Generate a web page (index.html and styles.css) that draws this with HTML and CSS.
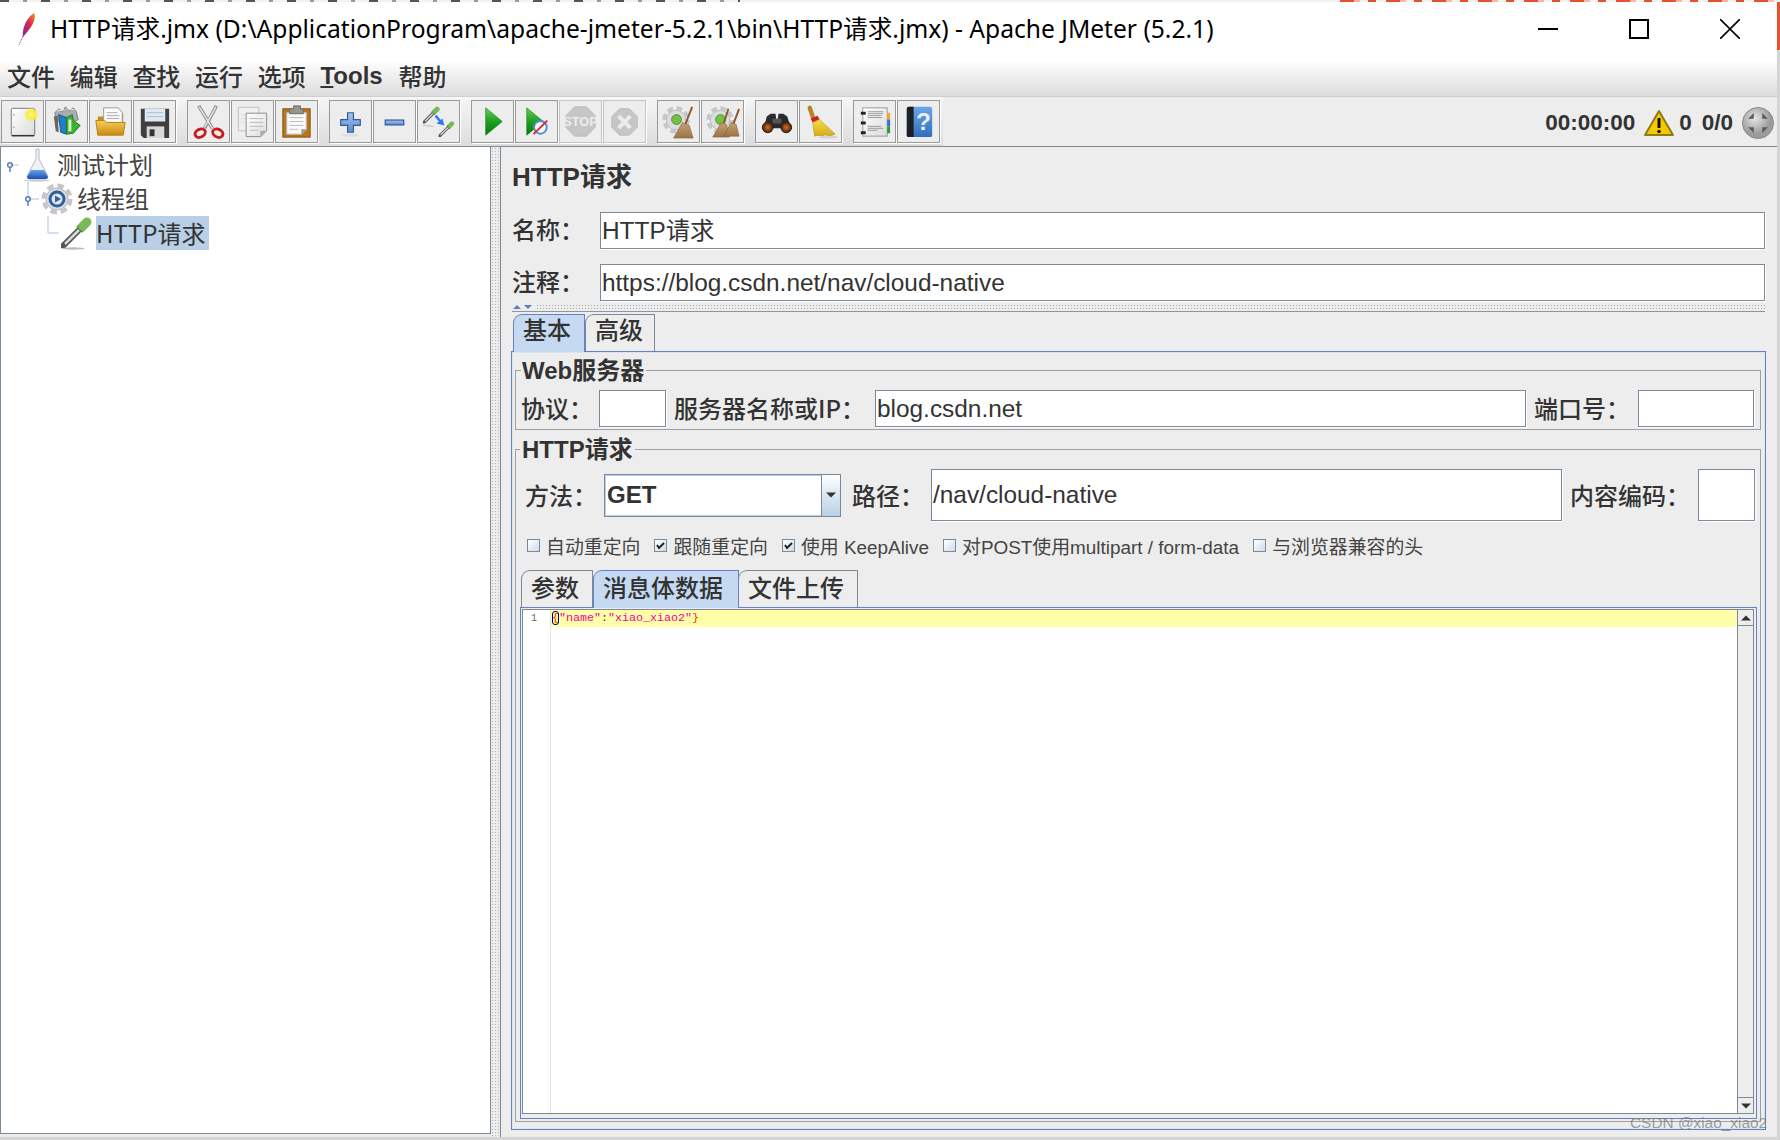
FILE: index.html
```html
<!DOCTYPE html>
<html lang="zh">
<head>
<meta charset="utf-8">
<title>HTTP请求.jmx - Apache JMeter (5.2.1)</title>
<link rel="stylesheet" href="styles.css">
</head>
<body>
<svg class="defs" aria-hidden="true">
  <defs>
    <linearGradient id="gPlay" x1="0" y1="0" x2="0" y2="1"><stop offset="0" stop-color="#6fca5e"/><stop offset=".5" stop-color="#1ea11e"/><stop offset="1" stop-color="#067a06"/></linearGradient>
    <linearGradient id="gFolder" x1="0" y1="0" x2="0" y2="1"><stop offset="0" stop-color="#f6cd5c"/><stop offset="1" stop-color="#c98a14"/></linearGradient>
    <linearGradient id="gPage" x1="0" y1="0" x2="1" y2="1"><stop offset="0" stop-color="#ffffff"/><stop offset="1" stop-color="#dcdcdc"/></linearGradient>
    <linearGradient id="gBlue" x1="0" y1="0" x2="0" y2="1"><stop offset="0" stop-color="#a6c4ea"/><stop offset="1" stop-color="#5d8ccc"/></linearGradient>
    <linearGradient id="gFeather" x1="1" y1="0" x2="0" y2="1"><stop offset="0" stop-color="#f7941e"/><stop offset=".45" stop-color="#d9264f"/><stop offset="1" stop-color="#7c2a8c"/></linearGradient>
    <linearGradient id="gHelp" x1="0" y1="0" x2="0" y2="1"><stop offset="0" stop-color="#68a6e8"/><stop offset="1" stop-color="#2f6fbd"/></linearGradient>
    <linearGradient id="gFlask" x1="0" y1="0" x2="0" y2="1"><stop offset="0" stop-color="#63a3ec"/><stop offset="1" stop-color="#1c4fb0"/></linearGradient>
    <linearGradient id="gBroom" x1="0" y1="0" x2="0" y2="1"><stop offset="0" stop-color="#f5e04a"/><stop offset="1" stop-color="#d4a615"/></linearGradient>
    <linearGradient id="gTwig" x1="0" y1="0" x2="0" y2="1"><stop offset="0" stop-color="#c7a173"/><stop offset="1" stop-color="#9a7346"/></linearGradient>
    <radialGradient id="gGlow"><stop offset="0" stop-color="#fff68a"/><stop offset=".5" stop-color="#f9ec3e"/><stop offset="1" stop-color="#f9ec3e" stop-opacity="0"/></radialGradient>
    <radialGradient id="gKnob" cx=".4" cy=".35"><stop offset="0" stop-color="#e6e6e6"/><stop offset="1" stop-color="#9b9b9b"/></radialGradient>
    <radialGradient id="gLens" cx=".5" cy=".5"><stop offset="0" stop-color="#d9701f"/><stop offset="1" stop-color="#47210c"/></radialGradient>
    <symbol id="gear" viewBox="0 0 32 32">
      <circle cx="16" cy="16" r="13.500" fill="none" stroke="#c4c6c9" stroke-width="4" stroke-dasharray="6.600 4"/>
      <circle cx="16" cy="16" r="11" fill="#dcdde0" stroke="#b2b4b7"/>
    </symbol>
    <symbol id="dropper" viewBox="0 0 32 32">
      <path d="M2 30 L19 13" stroke="#555" stroke-width="6" stroke-linecap="round"/>
      <path d="M4 28 L18 14" stroke="#d8d8d8" stroke-width="2.500"/>
      <path d="M17 9 L23 15" stroke="#5d9a3f" stroke-width="5"/>
      <path d="M22 10 L26 6" stroke="#79b95a" stroke-width="9" stroke-linecap="round"/>
    </symbol>
  </defs>
</svg>
<div class="window">
  <div class="strip">
    <span class="strip-dark"></span>
    <span class="strip-gap"></span>
    <span class="strip-red"></span>
  </div>
  <div class="frame">
    <header class="titlebar">
      <svg class="feather" width="20" height="34" viewBox="0 0 20 34"><path d="M17 1 C20 6 15 14 11 19 L6 25 C5 20 7 8 17 1Z" fill="url(#gFeather)"/><path d="M6 24 L2 33" stroke="#8c6a9c" stroke-width="1" stroke-dasharray="2 1"/></svg>
      <h1 class="title">HTTP请求.jmx (D:\ApplicationProgram\apache-jmeter-5.2.1\bin\HTTP请求.jmx) - Apache JMeter (5.2.1)</h1>
      <div class="winbtns">
        <svg width="20" height="20" viewBox="0 0 20 20"><path d="M0 10h20" stroke="#000" stroke-width="2"/></svg>
        <svg width="20" height="20" viewBox="0 0 20 20"><rect x="1" y="1" width="18" height="18" fill="none" stroke="#000" stroke-width="2"/></svg>
        <svg width="20" height="20" viewBox="0 0 20 20"><path d="M0 0L20 20M20 0L0 20" stroke="#000" stroke-width="1.600"/></svg>
      </div>
    </header>
    <nav class="menubar">
      <span>文件</span><span>编辑</span><span>查找</span><span>运行</span><span>选项</span><span class="menu-tools"><u>T</u>ools</span><span>帮助</span>
    </nav>
    <div class="toolbar">
      <div class="tools">
        <div class="group">
          <button class="tb"><svg width="41" height="41" viewBox="0 0 42 42"><rect x="9.500" y="7.500" width="24" height="28" rx="1" fill="url(#gPage)" stroke="#777"/><path d="M10 35.500h23" stroke="#333" stroke-width="1.500"/><circle cx="12" cy="14" r=".8" fill="#999"/><circle cx="12" cy="27" r=".8" fill="#999"/><circle cx="30" cy="14" r="8" fill="url(#gGlow)"/></svg></button>
          <button class="tb"><svg width="41" height="41" viewBox="0 0 42 42"><path d="M9 12l4-4 4 3 3-5 4 4 4-3 3 4 2 8-4 2H11z" fill="#a7adb2" stroke="#7a7f83"/><path d="M11 10l8-1M21 8l8 1" stroke="#e4e6e8"/><path d="M8 16l4-1 1 17-3-1z" fill="#6c6660"/><path d="M13 14l8 3v17l-6-2z" fill="#1f7fc9" stroke="#11568d"/><path d="M21 17l6-3 1 6 7 5-7 8-7 1z" fill="#3fb02f" stroke="#1f7a1a"/><path d="M23 19h3v12h-3z" fill="#d8f0cf"/></svg></button>
          <button class="tb"><svg width="41" height="41" viewBox="0 0 42 42"><path d="M8 16h8l2-3h16v20H8z" fill="#c78e1e"/><path d="M14 7h15l4 5v11H14z" fill="#fbfbfb" stroke="#999"/><path d="M17 12h11M17 15h13M17 18h13" stroke="#aaa"/><path d="M6 20h9l2 2h19l-2 13H8z" fill="url(#gFolder)" stroke="#b9810f"/></svg></button>
          <button class="tb"><svg width="41" height="41" viewBox="0 0 42 42"><path d="M7 8h29v30H10l-3-3z" fill="#3f3f42"/><rect x="11" y="8" width="21" height="13" fill="#e1e8f2"/><path d="M13 12h17M13 16h17" stroke="#a7bad3"/><path d="M13 26h18v12H13z" fill="#d8d8d8"/><rect x="16" y="29" width="5" height="7" fill="#333"/></svg></button>
        </div>
        <div class="group">
          <button class="tb"><svg width="41" height="41" viewBox="0 0 42 42"><path d="M11 5l14 23M29 5L17 28" stroke="#8b8b8b" stroke-width="3.500"/><path d="M11.500 6l13.500 22M28.500 6L17 27" stroke="#e6e6e6" stroke-width="1.600"/><ellipse cx="12.500" cy="33" rx="5.500" ry="4" fill="none" stroke="#cc1a1f" stroke-width="3" transform="rotate(-25 12.500 33)"/><ellipse cx="30.500" cy="33" rx="5.500" ry="4" fill="none" stroke="#cc1a1f" stroke-width="3" transform="rotate(25 30.500 33)"/></svg></button>
          <button class="tb"><svg width="41" height="41" viewBox="0 0 42 42"><rect x="6.500" y="6.500" width="21" height="24" fill="#efefef" stroke="#c2c2c2"/><path d="M9 14h6M9 18h6M9 22h6" stroke="#ddd"/><path d="M14.500 12.500h21v18l-6 6h-15z" fill="url(#gPage)" stroke="#8d8d8d"/><path d="M35 30.500h-6v6z" fill="#aaa"/><path d="M18 18h14M18 22h14M18 26h14M18 30h9" stroke="#bbb"/></svg></button>
          <button class="tb"><svg width="41" height="41" viewBox="0 0 42 42"><rect x="7" y="8" width="28" height="29" fill="#b8751c" stroke="#83531a"/><path d="M11 12h20v17l-5 5H11z" fill="#fafafa" stroke="#bbb"/><path d="M31 29h-5v5z" fill="#999"/><path d="M14 17h14M14 21h14M14 25h14M14 29h9" stroke="#bbb"/><path d="M14 8h4V5h7v3h3v5H14z" fill="#96958a" stroke="#6d6c63"/></svg></button>
        </div>
        <div class="group">
          <button class="tb"><svg width="41" height="41" viewBox="0 0 42 42"><path d="M18 12h6v7h7v6h-7v7h-6v-7h-7v-6h7z" fill="url(#gBlue)" stroke="#2c5aa0" stroke-width="1.200"/><ellipse cx="21" cy="35" rx="9" ry="1.500" fill="#ddd"/></svg></button>
          <button class="tb"><svg width="41" height="41" viewBox="0 0 42 42"><rect x="11.500" y="19.500" width="19" height="5" fill="url(#gBlue)" stroke="#2c5aa0" stroke-width="1.200"/></svg></button>
          <button class="tb"><svg width="41" height="41" viewBox="0 0 42 42"><use href="#dropper" x="5" y="5" width="18" height="18"/><use href="#dropper" x="21" y="20" width="17" height="17"/><path d="M5 25l11 1" stroke="#bbb"/><path d="M18 15l5 6" stroke="#2a7af0" stroke-width="2.500"/><path d="M27 25l-2-7-6 5z" fill="#2a7af0"/></svg></button>
        </div>
        <div class="group">
          <button class="tb"><svg width="41" height="41" viewBox="0 0 42 42"><path d="M14 7l17 14-17 14z" fill="url(#gPlay)" stroke="#0a7d0a" stroke-width=".6"/></svg></button>
          <button class="tb"><svg width="41" height="41" viewBox="0 0 42 42"><path d="M11 7l17 14-17 14z" fill="url(#gPlay)" stroke="#0a7d0a" stroke-width=".6"/><circle cx="25" cy="27" r="6.500" fill="#f3f6fa" stroke="#4f8fd2" stroke-width="2"/><path d="M18 34L32 20" stroke="#e0202a" stroke-width="1.800"/></svg></button>
          <button class="tb tb-off"><svg width="41" height="41" viewBox="0 0 42 42"><path d="M15 6h12l9 9v12l-9 9H15l-9-9V15z" fill="#c6c6c6" stroke="#bbb"/><text class="stop-text" x="21" y="26" text-anchor="middle">STOP</text></svg></button>
          <button class="tb tb-off"><svg width="41" height="41" viewBox="0 0 42 42"><path d="M16 8h10l8 8v11l-8 8H16l-8-8V16z" fill="#c6c6c6" stroke="#bbb"/><path d="M15 15.500l12 12M27 15.500l-12 12" stroke="#ececec" stroke-width="4"/></svg></button>
        </div>
        <div class="group">
          <button class="tb"><svg width="41" height="41" viewBox="0 0 42 42"><use href="#gear" x="4" y="5" width="29" height="29"/><circle cx="19" cy="19" r="5" fill="#76c043" stroke="#4f8f2a"/><path d="M35 6L28 24" stroke="#8a5b2e" stroke-width="2"/><path d="M25 22l7 3 4 13H16z" fill="url(#gTwig)" stroke="#86633a" stroke-width=".6"/></svg></button>
          <button class="tb"><svg width="41" height="41" viewBox="0 0 42 42"><use href="#gear" x="4" y="5" width="29" height="29"/><circle cx="19" cy="19" r="5" fill="#76c043" stroke="#4f8f2a"/><path d="M27 8L22 24M38 8L32 24" stroke="#8a5b2e" stroke-width="2"/><path d="M20 22l5 2 3 13H11z" fill="url(#gTwig)" stroke="#86633a" stroke-width=".6"/><path d="M30 22l5 2 3 12H22z" fill="url(#gTwig)" stroke="#86633a" stroke-width=".6"/></svg></button>
        </div>
        <div class="group">
          <button class="tb"><svg width="41" height="41" viewBox="0 0 42 42"><path d="M11 16l4-3h5l1 8h1l1-8h5l4 3 4 12H8z" fill="#2b2b2b"/><rect x="17" y="18" width="9" height="5" fill="#555"/><circle cx="12" cy="27" r="5.500" fill="url(#gLens)" stroke="#222"/><circle cx="31" cy="27" r="5.500" fill="url(#gLens)" stroke="#222"/></svg></button>
          <button class="tb"><svg width="41" height="41" viewBox="0 0 42 42"><path d="M10 7l4 12" stroke="#b9812d" stroke-width="4.500" stroke-linecap="round"/><path d="M11 18l7-3 2 4-7 3z" fill="#cf1f25"/><path d="M13 22l7-3 16 15-7 2-4-2-1 3-5-2-4 1z" fill="url(#gBroom)" stroke="#b58e12" stroke-width=".6"/><ellipse cx="29" cy="37" rx="10" ry="1.500" fill="#d4d4d4"/></svg></button>
        </div>
        <div class="group">
          <button class="tb"><svg width="41" height="41" viewBox="0 0 42 42"><rect x="9" y="7" width="25" height="29" fill="url(#gPage)" stroke="#999"/><path d="M14 11h16M14 13h16M14 15h14M14 17h15M14 26h14M14 28h16M14 30h10" stroke="#999"/><rect x="34" y="12" width="3" height="7" fill="#f2a81d"/><rect x="34" y="19" width="3" height="7" fill="#2f73d6"/><rect x="34" y="26" width="3" height="7" fill="#2c9c33"/><rect x="7" y="11" width="5" height="3" fill="#222"/><rect x="7" y="21" width="5" height="3" fill="#222"/><rect x="7" y="31" width="5" height="3" fill="#222"/></svg></button>
          <button class="tb"><svg width="41" height="41" viewBox="0 0 42 42"><rect x="9" y="6" width="26" height="31" rx="2" fill="url(#gHelp)"/><path d="M9 8q0-2 2-2h5v31h-5q-2 0-2-2z" fill="#1c1f26"/><text class="help-text" x="26" y="30" text-anchor="middle">?</text></svg></button>
        </div>
      </div>
      <div class="status">
        <span class="time">00:00:00</span>
        <svg width="32" height="28" viewBox="0 0 32 28"><path d="M16 2L30 26H2z" fill="#f7c900" stroke="#8d7c10" stroke-width="2" stroke-linejoin="round"/><path d="M16 9v10" stroke="#111" stroke-width="3"/><circle cx="16" cy="22.500" r="1.800" fill="#111"/></svg>
        <span class="count">0</span>
        <span class="count ratio">0/0</span>
        <svg class="knob" width="32" height="32" viewBox="0 0 32 32"><circle cx="16" cy="16" r="15.500" fill="url(#gKnob)" stroke="#8a8a8a"/><path d="M12 6h8l-4 4zM12 26h8l-4-4zM6 12v8l4-4zM26 12v8l-4-4z" fill="#5a5a5a" transform="rotate(45 16 16)"/></svg>
      </div>
    </div>
    <main class="main">
      <aside class="tree">
        <div class="node node-plan">
          <svg class="conn" width="20" height="34" viewBox="0 0 20 34"><path d="M9 17h9" stroke="#a9c2e0"/><circle cx="9" cy="17" r="2.300" fill="none" stroke="#5d7fb8" stroke-width="1.500"/><path d="M9 19v5" stroke="#5d7fb8" stroke-width="1.500"/></svg>
          <svg width="28" height="34" viewBox="0 0 28 34"><path d="M12 1v10L3 28q0 3 3 3h15q3 0 3-3l-9-17V1z" fill="#eef2f6" stroke="#b5bcc4"/><path d="M7 22h13l4 7q0 2-3 2H6q-3 0-3-2z" fill="url(#gFlask)"/><ellipse cx="13" cy="32.500" rx="13" ry="1.200" fill="#ccc"/></svg>
          <span class="node-text">测试计划</span>
        </div>
        <div class="node node-group">
          <svg class="conn" width="16" height="34" viewBox="0 0 16 34"><path d="M4 0v14" stroke="#a9c2e0"/><path d="M4 17h11" stroke="#a9c2e0"/><circle cx="4" cy="17" r="2.300" fill="none" stroke="#5d7fb8" stroke-width="1.500"/><path d="M4 19v5" stroke="#5d7fb8" stroke-width="1.500"/></svg>
          <svg width="32" height="32" viewBox="0 0 32 32"><use href="#gear" x="0" y="0" width="32" height="32"/><circle cx="16" cy="16" r="8.500" fill="#2f5f9e"/><circle cx="16" cy="16" r="5.500" fill="#dfe7f2"/><path d="M14 12.500l6 3.500-6 3.500z" fill="#2f5f9e"/></svg>
          <span class="node-text node-text-2">线程组</span>
        </div>
        <div class="node node-sampler">
          <svg class="conn" width="14" height="34" viewBox="0 0 14 34"><path d="M1 0v17h11" fill="none" stroke="#a9c2e0"/></svg>
          <svg width="33" height="34" viewBox="0 0 33 34"><use href="#dropper" x="0" y="0" width="32" height="32"/><ellipse cx="12" cy="32.500" rx="12" ry="1.200" fill="#bbb"/></svg>
          <span class="node-sel">HTTP请求</span>
        </div>
      </aside>
      <div class="divider"></div>
      <section class="detail">
        <h2 class="heading">HTTP请求</h2>
        <div class="form-row">
          <label class="form-label">名称：</label>
          <div class="field grow">HTTP请求</div>
        </div>
        <div class="form-row form-row-2">
          <label class="form-label">注释：</label>
          <div class="field grow">https://blog.csdn.net/nav/cloud-native</div>
        </div>
        <div class="splitter">
          <svg width="24" height="8" viewBox="0 0 24 8"><path d="M1 6l4-4 4 4z" fill="#5d7fb8"/><path d="M12 2h8l-4 4z" fill="#5d7fb8"/></svg>
          <span class="dots"></span>
        </div>
        <div class="tabs">
          <span class="tab tab-on">基本</span><span class="tab">高级</span>
        </div>
        <div class="tabpanel">
          <fieldset class="group-box">
            <legend class="legend">Web服务器</legend>
            <div class="web-row">
              <label>协议：</label>
              <div class="field"></div>
              <label class="ml">服务器名称或IP：</label>
              <div class="field">blog.csdn.net</div>
              <label class="ml">端口号：</label>
              <div class="field"></div>
            </div>
          </fieldset>
          <fieldset class="group-box group-http">
            <legend class="legend">HTTP请求</legend>
            <div class="http-row">
              <label>方法：</label>
              <div class="combo"><span class="combo-value">GET</span><span class="combo-btn"><svg width="12" height="6" viewBox="0 0 12 6"><path d="M0 0h12L6 6z" fill="#333"/></svg></span></div>
              <label class="ml-path">路径：</label>
              <div class="field tall">/nav/cloud-native</div>
              <label class="ml">内容编码：</label>
              <div class="field tall"></div>
            </div>
            <div class="checks">
              <span class="check"><i class="box"></i>自动重定向</span>
              <span class="check"><i class="box"><svg width="11" height="11" viewBox="0 0 11 11"><path d="M2 5l2 3 5-5" fill="none" stroke="#222" stroke-width="2"/></svg></i>跟随重定向</span>
              <span class="check"><i class="box"><svg width="11" height="11" viewBox="0 0 11 11"><path d="M2 5l2 3 5-5" fill="none" stroke="#222" stroke-width="2"/></svg></i>使用 KeepAlive</span>
              <span class="check"><i class="box"></i>对POST使用multipart / form-data</span>
              <span class="check"><i class="box"></i>与浏览器兼容的头</span>
            </div>
            <div class="tabs tabs-inner">
              <span class="tab">参数</span><span class="tab tab-on">消息体数据</span><span class="tab">文件上传</span>
            </div>
            <div class="inner-panel">
              <div class="editor">
                <div class="gutter">1</div>
                <div class="code">
                  <div class="code-line"><span class="brace brace-match">{</span><span class="str">"name"</span><span class="colon">:</span><span class="str">"xiao_xiao2"</span><span class="brace">}</span></div>
                </div>
                <div class="scrollbar">
                  <span class="sb-btn"><svg width="12" height="6" viewBox="0 0 12 6"><path d="M0 6h12L6 0z" fill="#333"/></svg></span>
                  <span class="sb-track"></span>
                  <span class="sb-btn"><svg width="12" height="6" viewBox="0 0 12 6"><path d="M0 0h12L6 6z" fill="#333"/></svg></span>
                </div>
              </div>
            </div>
          </fieldset>
        </div>
      </section>
    </main>
  </div>
</div>
<div class="watermark">CSDN @xiao_xiao2</div>
</body>
</html>
```

FILE: styles.css
```css
* { box-sizing: border-box; }
html, body { margin: 0; padding: 0; }
body {
  width: 1780px;
  height: 1140px;
  overflow: hidden;
  background: linear-gradient(#e8502e 0 50px, #d4d4d4 50px);
  color: #333;
  font-family: "Liberation Sans", "Noto Sans CJK SC", sans-serif;
  font-size: 24px;
}
.defs { display: block; width: 0; height: 0; }
.window { width: 1780px; height: 1140px; display: flex; flex-direction: column; }
.strip { height: 2px; display: flex; background: #f2f2f2; }
.strip-dark { width: 740px; background: repeating-linear-gradient(90deg, #555 0 9px, transparent 9px 23px, #999 23px 27px, transparent 27px 41px); }
.strip-gap { flex: 1; }
.strip-red { width: 440px; background: repeating-linear-gradient(90deg, #e8502e 0 14px, #f8b9a6 14px 20px, transparent 20px 28px, #e8502e 28px 36px, transparent 36px 46px); }
.frame { width: 1777px; height: 1135px; display: flex; flex-direction: column; background: #e9e9e9; }

.titlebar { height: 58px; background: #fff; display: flex; align-items: center; padding: 0 0 5px 17px; }
.feather { flex: none; margin-top: 1px; }
.title { margin: 0 0 3px 13px; font: 400 24.600px "Noto Sans", "Noto Sans CJK SC", sans-serif; color: #000; white-space: nowrap; }
.winbtns { margin-left: auto; display: flex; gap: 71px; padding-right: 37px; }

.menubar {
  height: 37px;
  background: linear-gradient(#fff, #fbfbfb 10%, #dcdcdc);
  border-bottom: 1px solid #cfcfcf;
  display: flex;
  align-items: center;
  gap: 14.700px;
  padding: 0 0 4px 7px;
  font-family: "Noto Sans CJK SC", sans-serif;
  font-weight: 500;
  font-size: 24px;
  color: #333;
}
.menubar span { width: 48px; line-height: 30px; white-space: nowrap; }
.menubar .menu-tools { width: 63.300px; font: 700 24px "Liberation Sans", sans-serif; }

.toolbar { height: 50px; display: flex; justify-content: space-between; background: #ededed; border-bottom: 1px solid #7a8a99; }
.tools { width: 943px; display: flex; gap: 11px; padding: 3px 0 0 1px; background: linear-gradient(#f6f6f6, #dcdcdc); }
.group { display: flex; gap: 1px; height: 44px; }
.tb { width: 43px; height: 43px; padding: 0; background: #ededed; border: 1px solid #999; box-shadow: 1px 1px 0 #fff; display: flex; align-items: center; justify-content: center; }
.tb-off { border-color: #c4c4c4; }
.stop-text { font: 700 13px "Liberation Sans", sans-serif; fill: #ededed; }
.help-text { font: 700 25px "Liberation Sans", sans-serif; fill: #e6f0fb; }
.status { display: flex; align-items: center; height: 49px; padding: 3px 3px 0 0; font: 700 22.500px "Liberation Sans", sans-serif; color: #333; }
.time { margin-right: 8px; }
.count { margin-left: 4px; }
.ratio { margin-left: 10px; margin-right: 9px; }

.main { flex: 1; display: flex; background: #ededed; min-height: 0; }
.tree { width: 491px; margin-bottom: 3px; background: #fff; border: 1px solid #7a8a99; border-top: 0; padding-top: 1px; font-family: "Noto Sans CJK SC", sans-serif; }
.node { height: 34px; display: flex; align-items: center; color: #333; }
.node-plan .conn { margin-right: 3px; }
.node-group { padding-left: 23px; }
.node-group .conn { margin-right: 1px; }
.node-sampler { padding-left: 46px; }
.node-text { margin-left: 5px; padding-bottom: 2px; line-height: 32px; color: #444; }
.node-text-2 { margin-left: 4px; }
.node-sel { margin-left: 2px; background: #b8cfe5; line-height: 34px; height: 34px; padding: 0 4px 0 0; white-space: nowrap; }
.conn { flex: none; }

.divider { width: 9px; background-image: radial-gradient(#b5b5b5 .8px, transparent 1px); background-size: 3px 3px; }
.detail { flex: 1; border-left: 1px solid #7a8a99; padding: 0 12px 7px 11px; display: flex; flex-direction: column; min-width: 0; }
.heading { margin: 14px 0 0; height: 32px; line-height: 32px; font-size: 26px; font-weight: 700; color: #333; }

.form-row { display: flex; align-items: center; margin-top: 19px; height: 37px; }
.form-row-2 { margin-top: 15px; }
.form-label { width: 88px; flex: none; padding-bottom: 4px; font-family: "Noto Sans CJK SC", sans-serif; font-weight: 500; }
.field { background: #fff; border: 1px solid #7a8a99; box-shadow: 1px 1px 0 #fff; padding: 0 1px; font-size: 24.400px; line-height: 35px; height: 37px; white-space: nowrap; color: #333; }
.grow { flex: 1; }

.splitter { height: 10px; margin-top: 1px; display: flex; align-items: center; border-bottom: 1px solid #8a96a3; }
.dots { flex: 1; height: 6px; background-image: radial-gradient(#a9a9a9 .7px, transparent 1px); background-size: 3px 3px; }
.splitter svg { flex: none; }

.tabs { display: flex; align-items: flex-start; height: 38px; margin: 2px 0 -1px 1px; position: relative; z-index: 1; font-family: "Noto Sans CJK SC", sans-serif; font-weight: 500; }
.tab { height: 37px; padding: 0 9px; line-height: 28px; border: 1px solid #7a8a99; border-bottom: 0; border-top-left-radius: 9px; white-space: nowrap; margin-right: -1px; background: #ededed; }
.tab-on { height: 38px; background: #c5daf0; border-color: #6382bf; z-index: 1; position: relative; }
.tabs > .tab:first-child { width: 72px; }
.tabs > .tab:nth-child(2) { width: 70px; margin-left: 1px; }

.tabpanel { flex: 1; margin-left: -1px; width: 1255px; border: 1px solid #6382bf; box-shadow: inset 0 0 0 1px #d8e4f2; background: #ededed; padding: 4px 4px 0 3px; min-height: 0; }
.group-box { margin: 0; padding: 6px 5px 2px; border: 1px solid #a0a0a0; min-width: 0; }
.legend { margin: 0; padding: 0 2px 0 1px; height: 28px; line-height: 30px; font-weight: 700; white-space: nowrap; }
.web-row { display: grid; grid-template-columns: 78px 67px 209px 651px 112px 116px; align-items: center; font-family: "Noto Sans CJK SC", sans-serif; font-weight: 500; }
.web-row label, .http-row label { white-space: nowrap; padding-bottom: 2px; }
.web-row .ml { padding-left: 8px; }
.web-row .field, .http-row .field { font-family: "Liberation Sans", sans-serif; font-weight: 400; }

.group-http { margin-top: 5px; padding: 6px 3px 2px 4px; }
.group-http .legend { padding-left: 2px; }
.http-row { display: grid; grid-template-columns: 79px 237px 90px 631px 136px 57px; align-items: center; padding-left: 5px; font-family: "Noto Sans CJK SC", sans-serif; font-weight: 500; }
.ml-path { padding-left: 11px; }
.http-row .ml { padding-left: 8px; }
.tall { height: 52px; line-height: 50px; }
.combo { height: 43px; display: flex; border: 1px solid #7a8a99; background: #fff; font-family: "Liberation Sans", sans-serif; }
.combo-value { flex: 1; padding-left: 1px; font-weight: 700; line-height: 38px; border: 1px solid #b8cfe5; border-right: 0; }
.combo-btn { width: 19px; background: linear-gradient(#fff, #b8cfe5); border-left: 1px solid #7a8a99; display: flex; align-items: center; justify-content: center; }
.combo-btn svg { width: 10px; }

.checks { height: 49px; display: flex; align-items: center; gap: 14px; padding-left: 7px; font-size: 18.900px; color: #444; }
.check { display: flex; align-items: center; white-space: nowrap; font-family: "Liberation Sans", "Noto Sans CJK SC", sans-serif; }
.box { flex: none; width: 13px; height: 13px; margin-right: 6px; border: 1px solid #7a8a99; background: linear-gradient(135deg, #fff, #cfdceb); display: flex; align-items: center; justify-content: center; }

.tabs-inner { margin: 0 0 -1px 1px; }
.tabs-inner > .tab { line-height: 32px; }
.tabs-inner > .tab:first-child { width: 72px; }
.tabs-inner > .tab:nth-child(2) { width: 146px; margin-left: 1px; }
.tabs-inner > .tab:nth-child(3) { width: 120px; }

.inner-panel { border: 1px solid #6382bf; padding: 1px 2px 4px 1px; }
.editor { height: 505px; display: flex; background: #fff; border: 1px solid #7a8a99; }
.gutter { width: 28px; flex: none; border-right: 1px solid #e2e2e2; font: 10px "Liberation Mono", monospace; color: #666; text-align: right; padding: 1px 13px 0 0; line-height: 16px; }
.code { flex: 1; min-width: 0; }
.code-line { height: 17px; background: #ffffaa; font: 11.670px/16px "Liberation Mono", monospace; padding-left: 1px; white-space: pre; }
.brace { color: #ff2a00; }
.brace-match { outline: 1px solid #00006e; outline-offset: -1px; border-radius: 3px; }
.str { color: #f000a0; }
.colon { color: #333; }
.scrollbar { width: 16px; flex: none; display: flex; flex-direction: column; border-left: 1px solid #7a8a99; background: #ededed; }
.sb-btn { height: 16px; display: flex; align-items: center; justify-content: center; background: #ededed; border-bottom: 1px solid #7a8a99; }
.sb-btn:last-child { border-top: 1px solid #7a8a99; border-bottom: 0; }
.sb-btn svg { width: 10px; }
.sb-track { flex: 1; }

.watermark { position: absolute; left: 1630px; top: 1114px; font: 15.400px "Liberation Sans", sans-serif; color: rgba(125, 125, 125, .75); white-space: nowrap; }
```
